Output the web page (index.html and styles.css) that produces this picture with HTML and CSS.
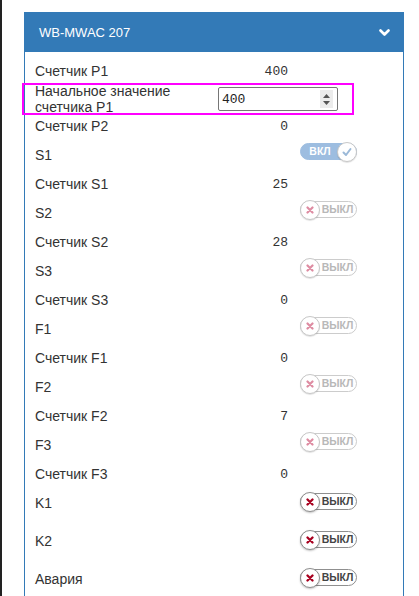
FILE: index.html
```html
<!DOCTYPE html>
<html lang="ru">
<head>
<meta charset="utf-8">
<link rel="stylesheet" href="styles.css">
</head>
<body>
<div class="page">
  <div class="strip"></div>
  <div class="panel">
    <div class="panel-head">
      <span class="title">WB-MWAC 207</span>
      <svg class="chev" width="11" height="8" viewBox="0 0 11 8"><polyline points="1.5,1.5 5.5,5.5 9.5,1.5" fill="none" stroke="#fff" stroke-width="2.6" stroke-linecap="round" stroke-linejoin="round"/></svg>
    </div>
    <div class="panel-body">
      <div class="row"><div class="label">Счетчик P1</div><div class="val">400</div></div>
      <div class="row hl">
        <div class="label two">Начальное значение счетчика P1</div>
        <div class="num"><span class="num-text">400</span><span class="spin"><svg width="13" height="18" viewBox="0 0 13 18"><polygon points="3,8 10,8 6.5,4" fill="#555"/><polygon points="3,11 10,11 6.5,15" fill="#555"/></svg></span></div>
      </div>
      <div class="row"><div class="label">Счетчик P2</div><div class="val">0</div></div>

      <div class="row sw-row"><div class="label">S1</div>
        <div class="switch on dis"><span class="knob"><svg width="10" height="10" viewBox="0 0 10 10"><polyline points="1.5,5.5 4,8 8.5,2" fill="none" stroke="#9bb9d8" stroke-width="2" stroke-linecap="round" stroke-linejoin="round"/></svg></span><span class="sw-text">ВКЛ</span></div>
      </div>
      <div class="row"><div class="label">Счетчик S1</div><div class="val">25</div></div>

      <div class="row sw-row"><div class="label">S2</div>
        <div class="switch off dis"><span class="knob"><svg width="8" height="8" viewBox="0 0 8 8"><path d="M1.5 1.5L6.5 6.5M6.5 1.5L1.5 6.5" stroke="#de8ca2" stroke-width="2.2" stroke-linecap="round"/></svg></span><span class="sw-text">ВЫКЛ</span></div>
      </div>
      <div class="row"><div class="label">Счетчик S2</div><div class="val">28</div></div>

      <div class="row sw-row"><div class="label">S3</div>
        <div class="switch off dis"><span class="knob"><svg width="8" height="8" viewBox="0 0 8 8"><path d="M1.5 1.5L6.5 6.5M6.5 1.5L1.5 6.5" stroke="#de8ca2" stroke-width="2.2" stroke-linecap="round"/></svg></span><span class="sw-text">ВЫКЛ</span></div>
      </div>
      <div class="row"><div class="label">Счетчик S3</div><div class="val">0</div></div>

      <div class="row sw-row"><div class="label">F1</div>
        <div class="switch off dis"><span class="knob"><svg width="8" height="8" viewBox="0 0 8 8"><path d="M1.5 1.5L6.5 6.5M6.5 1.5L1.5 6.5" stroke="#de8ca2" stroke-width="2.2" stroke-linecap="round"/></svg></span><span class="sw-text">ВЫКЛ</span></div>
      </div>
      <div class="row"><div class="label">Счетчик F1</div><div class="val">0</div></div>

      <div class="row sw-row"><div class="label">F2</div>
        <div class="switch off dis"><span class="knob"><svg width="8" height="8" viewBox="0 0 8 8"><path d="M1.5 1.5L6.5 6.5M6.5 1.5L1.5 6.5" stroke="#de8ca2" stroke-width="2.2" stroke-linecap="round"/></svg></span><span class="sw-text">ВЫКЛ</span></div>
      </div>
      <div class="row"><div class="label">Счетчик F2</div><div class="val">7</div></div>

      <div class="row sw-row"><div class="label">F3</div>
        <div class="switch off dis"><span class="knob"><svg width="8" height="8" viewBox="0 0 8 8"><path d="M1.5 1.5L6.5 6.5M6.5 1.5L1.5 6.5" stroke="#de8ca2" stroke-width="2.2" stroke-linecap="round"/></svg></span><span class="sw-text">ВЫКЛ</span></div>
      </div>
      <div class="row"><div class="label">Счетчик F3</div><div class="val">0</div></div>

      <div class="row sw-row tall"><div class="label">K1</div>
        <div class="switch off en"><span class="knob"><svg width="8" height="8" viewBox="0 0 8 8"><path d="M1.5 1.5L6.5 6.5M6.5 1.5L1.5 6.5" stroke="#a8001f" stroke-width="2.3" stroke-linecap="round"/></svg></span><span class="sw-text">ВЫКЛ</span></div>
      </div>
      <div class="row sw-row tall"><div class="label">K2</div>
        <div class="switch off en"><span class="knob"><svg width="8" height="8" viewBox="0 0 8 8"><path d="M1.5 1.5L6.5 6.5M6.5 1.5L1.5 6.5" stroke="#a8001f" stroke-width="2.3" stroke-linecap="round"/></svg></span><span class="sw-text">ВЫКЛ</span></div>
      </div>
      <div class="row sw-row tall"><div class="label">Авария</div>
        <div class="switch off en"><span class="knob"><svg width="8" height="8" viewBox="0 0 8 8"><path d="M1.5 1.5L6.5 6.5M6.5 1.5L1.5 6.5" stroke="#a8001f" stroke-width="2.3" stroke-linecap="round"/></svg></span><span class="sw-text">ВЫКЛ</span></div>
      </div>
    </div>
  </div>
</div>
</body>
</html>
```

FILE: styles.css
```css
html, body {
  margin: 0;
  padding: 0;
  background: #fff;
  height: 100%;
  overflow: hidden;
}
body {
  font-family: "Liberation Sans", Arial, sans-serif;
  color: #333;
}
.page {
  display: flex;
  align-items: flex-start;
  height: 100%;
}
.strip {
  flex: 0 0 2px;
  align-self: stretch;
  background: #222;
}
.panel {
  margin-left: 22px;
  margin-top: 12px;
  width: 380px;
  box-sizing: border-box;
  border: 1px solid #337ab7;
  border-bottom: none;
}
.panel-head {
  height: 39px;
  background: #337ab7;
  display: flex;
  align-items: center;
  justify-content: space-between;
  padding: 0 13px 0 14px;
  color: #fff;
}
.title {
  font-size: 13px;
}
.chev {
  display: block;
  margin-top: 1px;
}
.panel-body {
  padding-top: 5px;
}
.row {
  display: flex;
  align-items: center;
  height: 29px;
  padding-left: 10px;
  font-size: 14px;
}
.label {
  flex: 0 0 183px;
  line-height: 29px;
  white-space: nowrap;
}
.label.two {
  white-space: normal;
  line-height: 16px;
}
.val {
  width: 70px;
  text-align: right;
  font-family: "Liberation Mono", "Courier New", monospace;
  font-size: 13px;
  color: #333;
}
.row.hl {
  height: 26px;
  width: 316px;
  outline: 2px solid #ff00ff;
  outline-offset: 1px;
}
.num {
  display: flex;
  align-items: center;
  justify-content: space-between;
  width: 120px;
  height: 24px;
  box-sizing: border-box;
  border: 1px solid #767676;
  border-radius: 2px;
  padding: 0 4px 0 3px;
  background: #fff;
}
.num-text {
  font-family: "Liberation Mono", "Courier New", monospace;
  font-size: 13px;
  color: #222;
}
.spin {
  display: flex;
  background: #ececec;
}
.spin svg {
  display: block;
}
.sw-row {
  align-items: flex-start;
}
.sw-row.tall {
  height: 38px;
}
.switch {
  margin-left: 82px;
  margin-top: 2px;
  display: flex;
  align-items: center;
  width: 57px;
  height: 17px;
  box-sizing: border-box;
  border-radius: 9px;
  border: 1px solid #ccc;
  background: #fff;
}
.sw-row.tall .switch {
  margin-top: 4px;
}
.switch.on {
  flex-direction: row-reverse;
  background: #9dbde0;
  border-color: #9dbde0;
}
.knob {
  flex: 0 0 20px;
  width: 20px;
  height: 20px;
  margin: -2px -1px;
  box-sizing: border-box;
  border-radius: 50%;
  border: 1px solid #c8c8c8;
  background: #fff;
  display: flex;
  align-items: center;
  justify-content: center;
  box-shadow: 0 1px 1px rgba(0,0,0,0.12);
}
.knob svg {
  display: block;
}
.sw-text {
  flex: 1;
  text-align: center;
  font-size: 10.5px;
  font-weight: bold;
  line-height: 15px;
  color: #b8b8b8;
}
.switch.on .sw-text {
  color: #fff;
  padding-left: 1px;
}
.switch.en {
  border-color: #8f8f8f;
}
.switch.en .knob {
  border-color: #8f8f8f;
  box-shadow: 0 1px 2px rgba(0,0,0,0.25);
}
.switch.en .sw-text {
  color: #444;
}
```
